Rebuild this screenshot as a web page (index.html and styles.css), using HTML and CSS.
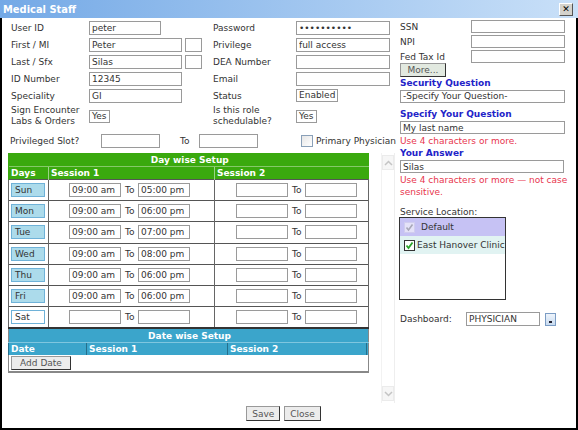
FILE: index.html
```html
<!DOCTYPE html>
<html lang="en">
<head>
  <meta charset="UTF-8">
  <title>Medical Staff</title>
  <link rel="stylesheet" href="styles.css">
</head>
<body>
  <div class="dialog">
    <div class="titlebar">
      <span class="title">Medical Staff</span>
      <span class="close-btn">&#x2715;</span>
    </div>

    <div class="content">
      <div class="panes">
        <div class="main">
          <div class="form-grid">
            <span class="lbl">User ID</span>
            <span class="cell"><input class="field w72" value="peter"></span>
            <span class="lbl">Password</span>
            <span class="cell"><input class="field w94" type="password" value="abcdefghij"></span>

            <span class="lbl">First / MI</span>
            <span class="cell"><input class="field w93" value="Peter"><input class="field w17"></span>
            <span class="lbl">Privilege</span>
            <span class="cell"><input class="field w94" value="full access"></span>

            <span class="lbl">Last / Sfx</span>
            <span class="cell"><input class="field w93" value="Silas"><input class="field w17"></span>
            <span class="lbl">DEA Number</span>
            <span class="cell"><input class="field w94"></span>

            <span class="lbl">ID Number</span>
            <span class="cell"><input class="field w93" value="12345"></span>
            <span class="lbl">Email</span>
            <span class="cell"><input class="field w94"></span>

            <span class="lbl">Speciality</span>
            <span class="cell"><input class="field w93" value="GI"></span>
            <span class="lbl">Status</span>
            <span class="cell"><span class="choice">Enabled</span></span>

            <span class="lbl two-line">Sign Encounter<br>Labs &amp; Orders</span>
            <span class="cell"><span class="choice">Yes</span></span>
            <span class="lbl two-line">Is this role<br>schedulable?</span>
            <span class="cell"><span class="choice">Yes</span></span>
          </div>

          <div class="slot-row">
            <span class="slot-lbl">Privileged Slot?</span>
            <input class="field w59">
            <span class="slot-to">To</span>
            <input class="field w59">
            <span class="check-box"></span>
            <span class="check-lbl">Primary Physician</span>
          </div>

          <div class="scroll-area">
            <div class="tables">
              <table class="day-table">
                <colgroup><col class="c-days"><col class="c-s1"><col class="c-s2"></colgroup>
                <tr class="cap"><th colspan="3">Day wise Setup</th></tr>
                <tr class="head"><th>Days</th><th>Session 1</th><th>Session 2</th></tr>
                <tr>
                  <td><span class="day">Sun</span></td>
                  <td class="s1"><input class="time" value="09:00 am"><span class="to">To</span><input class="time" value="05:00 pm"></td>
                  <td class="s2"><input class="time"><span class="to">To</span><input class="time"></td>
                </tr>
                <tr>
                  <td><span class="day">Mon</span></td>
                  <td class="s1"><input class="time" value="09:00 am"><span class="to">To</span><input class="time" value="06:00 pm"></td>
                  <td class="s2"><input class="time"><span class="to">To</span><input class="time"></td>
                </tr>
                <tr>
                  <td><span class="day">Tue</span></td>
                  <td class="s1"><input class="time" value="09:00 am"><span class="to">To</span><input class="time" value="07:00 pm"></td>
                  <td class="s2"><input class="time"><span class="to">To</span><input class="time"></td>
                </tr>
                <tr>
                  <td><span class="day">Wed</span></td>
                  <td class="s1"><input class="time" value="09:00 am"><span class="to">To</span><input class="time" value="08:00 pm"></td>
                  <td class="s2"><input class="time"><span class="to">To</span><input class="time"></td>
                </tr>
                <tr>
                  <td><span class="day">Thu</span></td>
                  <td class="s1"><input class="time" value="09:00 am"><span class="to">To</span><input class="time" value="06:00 pm"></td>
                  <td class="s2"><input class="time"><span class="to">To</span><input class="time"></td>
                </tr>
                <tr>
                  <td><span class="day">Fri</span></td>
                  <td class="s1"><input class="time" value="09:00 am"><span class="to">To</span><input class="time" value="06:00 pm"></td>
                  <td class="s2"><input class="time"><span class="to">To</span><input class="time"></td>
                </tr>
                <tr>
                  <td><span class="day off">Sat</span></td>
                  <td class="s1"><input class="time"><span class="to">To</span><input class="time"></td>
                  <td class="s2"><input class="time"><span class="to">To</span><input class="time"></td>
                </tr>
              </table>

              <table class="date-table">
                <colgroup><col class="c-date"><col class="c-ds1"><col class="c-ds2"><col class="c-x"></colgroup>
                <tr class="cap"><th colspan="4">Date wise Setup</th></tr>
                <tr class="head"><th>Date</th><th>Session 1</th><th>Session 2</th><th></th></tr>
                <tr><td colspan="4"><button class="btn add-btn">Add Date</button></td></tr>
              </table>
            </div>
            <div class="scrollbar">
              <span class="arrow">
                <svg width="9" height="6" viewBox="0 0 9 6"><path d="M1 5 L4.5 1.5 L8 5" fill="none" stroke="#c4c4c4" stroke-width="1.5"/></svg>
              </span>
              <span class="arrow">
                <svg width="9" height="6" viewBox="0 0 9 6"><path d="M1 1 L4.5 4.5 L8 1" fill="none" stroke="#c4c4c4" stroke-width="1.5"/></svg>
              </span>
            </div>
          </div>
        </div>

        <div class="side">
          <div class="id-grid">
            <span class="lbl">SSN</span><input class="field w94">
            <span class="lbl">NPI</span><input class="field w94">
            <span class="lbl">Fed Tax Id</span><input class="field w94">
          </div>
          <button class="btn more-btn">More...</button>
          <div class="blue-lbl first">Security Question</div>
          <div class="wide-box">-Specify Your Question-</div>
          <div class="blue-lbl">Specify Your Question</div>
          <input class="field wide" value="My last name">
          <div class="hint">Use 4 characters or more.</div>
          <div class="blue-lbl tight">Your Answer</div>
          <input class="field wide answer" value="Silas">
          <div class="hint">Use 4 characters or more &mdash; not case sensitive.</div>

          <div class="loc-lbl">Service Location:</div>
          <div class="listbox">
            <div class="loc default">
              <svg width="11" height="11" viewBox="0 0 11 11"><rect x="0.5" y="0.5" width="10" height="10" fill="#e4e2f8" stroke="#d0cdef"/><path d="M2.5 5.5 L4.5 8 L8.5 2.5" fill="none" stroke="#a8a8b8" stroke-width="1.6"/></svg>
              <span class="loc-name">Default</span>
            </div>
            <div class="loc clinic">
              <svg width="11" height="11" viewBox="0 0 11 11"><rect x="0.5" y="0.5" width="10" height="10" fill="#fff" stroke="#333"/><path d="M2.5 5.5 L4.5 8 L8.5 2.5" fill="none" stroke="#2aa52a" stroke-width="1.8"/></svg>
              <span class="loc-name">East Hanover Clinic</span>
            </div>
          </div>

          <div class="dash-row">
            <span class="dash-lbl">Dashboard:</span>
            <input class="field w74" value="PHYSICIAN">
            <span class="dash-btn"></span>
          </div>
        </div>
      </div>

      <div class="actions">
        <button class="btn">Save</button>
        <button class="btn">Close</button>
      </div>
    </div>
  </div>
</body>
</html>
```

FILE: styles.css
```css
body {
  margin: 0;
  font-family: "DejaVu Sans", Verdana, sans-serif;
  font-size: 9px;
  color: #333;
}
.dialog {
  width: 578px;
  height: 430px;
  display: flex;
  flex-direction: column;
  background-color: #fff;
}
.titlebar {
  height: 18px;
  flex: none;
  display: flex;
  align-items: center;
  justify-content: space-between;
  padding: 0 5px 0 3px;
  background: linear-gradient(to right, #74a9e6, #c9e0f8);
}
.title {
  font-family: "DejaVu Sans Condensed", "DejaVu Sans", sans-serif;
  font-weight: bold;
  font-size: 11px;
  color: #fff;
}
.close-btn {
  width: 12px;
  height: 11px;
  line-height: 11px;
  text-align: center;
  font-size: 9px;
  font-weight: bold;
  color: #000;
  background-color: #d4d2cc;
  border: 1px solid;
  border-color: #fff #555 #555 #fff;
}
.content {
  flex: 1;
  display: flex;
  flex-direction: column;
  border-left: 2px solid #000;
  border-right: 2px solid #000;
  border-bottom: 2px solid #000;
}
.panes {
  height: 385px;
  display: flex;
}
.main {
  width: 392px;
  padding-left: 6px;
}
.field {
  box-sizing: border-box;
  height: 14px;
  padding: 0 2px;
  margin: 0;
  border: 1px solid #9a9a9a;
  font-family: "DejaVu Sans", Verdana, sans-serif;
  font-size: 9px;
  color: #333;
  background: #fff;
}
.w17 { width: 17px; margin-left: 3px; }
.w59 { width: 59px; }
.w72 { width: 72px; }
.w74 { width: 74px; }
.w93 { width: 93px; }
.w94 { width: 94px; }

/* top form */
.form-grid {
  display: grid;
  grid-template-columns: 78px 124px 83px 100px;
  grid-auto-rows: 17px;
  margin: 1px 0 0 3px;
  align-items: center;
}
.cell {
  display: flex;
  align-items: center;
}
.lbl {
  white-space: nowrap;
}
.two-line {
  line-height: 11px;
  align-self: center;
}
.form-grid > :nth-last-child(-n+4) {
  height: 22px;
  align-self: start;
  margin-top: 1px;
}
.form-grid > .cell:nth-last-child(-n+4) {
  align-items: center;
}
.choice {
  box-sizing: border-box;
  height: 13px;
  line-height: 11px;
  padding: 0 2px;
  border: 1px solid #9a9a9a;
  background: #fff;
}

/* privileged slot */
.slot-row {
  display: flex;
  align-items: center;
  height: 18px;
  margin-top: 11px;
  padding-left: 2px;
}
.slot-lbl {
  width: 91px;
}
.slot-to {
  margin-left: 20px;
  width: 19px;
}
.check-box {
  box-sizing: border-box;
  width: 12px;
  height: 12px;
  margin-left: 43px;
  border: 1px solid #8aa0b8;
  background: linear-gradient(135deg, #e6e6e6, #fff);
}
.check-lbl {
  margin-left: 3px;
  white-space: nowrap;
}

/* schedule tables */
.scroll-area {
  display: flex;
  height: 250px;
  margin-top: 3px;
}
.tables {
  width: 360px;
}
table {
  width: 360px;
  border-collapse: collapse;
  table-layout: fixed;
}
.day-table .c-days { width: 40px; }
.day-table .c-s1 { width: 166px; }
.day-table .c-s2 { width: 154px; }
.date-table .c-date { width: 78px; }
.date-table .c-ds1 { width: 141px; }
.date-table .c-ds2 { width: 139px; }
.date-table .c-x { width: 2px; }
th {
  padding: 0 0 0 2px;
  color: #fff;
  font-weight: bold;
  text-align: left;
  height: 12px;
  line-height: 12px;
  white-space: nowrap;
  overflow: hidden;
}
.cap th {
  text-align: center;
  height: 13px;
}
.day-table th {
  background-color: #3aa90e;
}
.day-table .head th {
  border-top: 1px solid #86c96a;
  border-left: 1px solid #9bd488;
}
.day-table td {
  height: 20.2px;
  padding: 0 0 0 2px;
  border-top: 1px solid #555;
  border-left: 1px solid #666;
  border-right: 1px solid #666;
}
.day-table tr:first-child th,
.day-table .head th:first-child {
  border-left: 1px solid #3aa90e;
}
.day {
  display: block;
  box-sizing: border-box;
  width: 34px;
  height: 14px;
  line-height: 12px;
  padding-left: 3px;
  background-color: #acdbeb;
  border: 1px solid #6fb2d8;
}
.day.off {
  background-color: #fff;
}
.day-table td.s1 {
  padding-left: 20px;
}
.day-table td.s2 {
  padding-left: 21px;
}
.time {
  box-sizing: border-box;
  width: 52px;
  height: 14px;
  padding: 0 2px;
  margin: 0;
  border: 1px solid #9a9a9a;
  font-family: "DejaVu Sans", Verdana, sans-serif;
  font-size: 9px;
  color: #333;
  vertical-align: middle;
}
.to {
  display: inline-block;
  width: 17px;
  padding-left: 4px;
  box-sizing: border-box;
  vertical-align: middle;
}
.date-table {
  border-top: 2px solid #333;
  border-left: 1px solid #888;
  border-right: 1px solid #888;
  border-bottom: 2px solid #888;
}
.date-table th {
  background-color: #3ba5cb;
}
.date-table .head th {
  border-top: 1px solid #7fc6df;
  border-left: 1px solid #256f8c;
}
.date-table td {
  padding: 1px 0 1px 2px;
}
.btn {
  box-sizing: border-box;
  height: 15px;
  padding: 0 5px;
  margin: 0;
  font-family: "DejaVu Sans", Verdana, sans-serif;
  font-size: 9px;
  line-height: 12px;
  color: #555;
  background-color: #ececec;
  border: 1px solid;
  border-color: #999 #333 #333 #999;
}
.add-btn {
  width: 60px;
  height: 14px;
}
.scrollbar {
  box-sizing: border-box;
  width: 14px;
  height: 250px;
  margin-left: 13px;
  display: flex;
  flex-direction: column;
  justify-content: space-between;
  padding: 2px 0;
  border-left: 1px solid #f2f2f2;
  border-right: 1px solid #eee;
}
.arrow {
  height: 13px;
  display: flex;
  align-items: center;
  justify-content: center;
  background-color: #f6f6f6;
  border: 1px solid #ebebeb;
}

/* right column */
.side {
  width: 170px;
  padding-top: 1px;
}
.id-grid {
  display: grid;
  grid-template-columns: 71px 94px;
  grid-auto-rows: 15px;
  align-items: center;
}
.id-grid .field {
  height: 13px;
}
.more-btn {
  width: 46px;
  height: 14px;
  margin-top: -1px;
  background-color: #e2e9e0;
}
.blue-lbl {
  color: #2323c8;
  font-weight: bold;
  line-height: 12px;
  margin-top: 5px;
}
.blue-lbl.first {
  margin-top: 0;
}
.blue-lbl.tight {
  margin-top: 0;
}
.wide-box {
  box-sizing: border-box;
  width: 165px;
  height: 13px;
  line-height: 11px;
  padding: 0 2px;
  margin-top: 1px;
  border: 1px solid #9a9a9a;
}
.field.wide {
  display: block;
  width: 165px;
  height: 13px;
  margin-top: 1px;
}
.field.answer {
  width: 164px;
  margin-top: 1px;
}
.hint {
  color: #e8354e;
  line-height: 12px;
  margin-top: 1px;
}
.loc-lbl {
  margin-top: 9px;
  line-height: 11px;
}
.listbox {
  box-sizing: border-box;
  width: 107px;
  height: 83px;
  margin: -1px 0 0 -1px;
  border: 1px solid #333;
  overflow: hidden;
}
.loc {
  display: flex;
  align-items: center;
  height: 18px;
  padding-left: 4px;
  white-space: nowrap;
}
.loc.default {
  background-color: #c6c2f4;
}
.loc.default .loc-name {
  margin-left: 6px;
}
.loc.clinic {
  background-color: #e1f3f2;
}
.loc.clinic .loc-name {
  margin-left: 2px;
}
.dash-row {
  display: flex;
  align-items: center;
  margin-top: 12px;
}
.dash-lbl {
  width: 66px;
}
.dash-btn {
  box-sizing: border-box;
  width: 11px;
  height: 13px;
  margin-left: 5px;
  border: 1px solid #7b9cc4;
  background: linear-gradient(#eef4fb, #c8dbf0);
  position: relative;
}
.dash-btn::after {
  content: "";
  position: absolute;
  left: 3px;
  bottom: 2px;
  width: 3px;
  height: 2px;
  background: #223;
}
.actions {
  flex: 1;
  display: flex;
  justify-content: center;
  align-items: flex-start;
  gap: 4px;
  padding: 3px 11px 0 0;
}
```
